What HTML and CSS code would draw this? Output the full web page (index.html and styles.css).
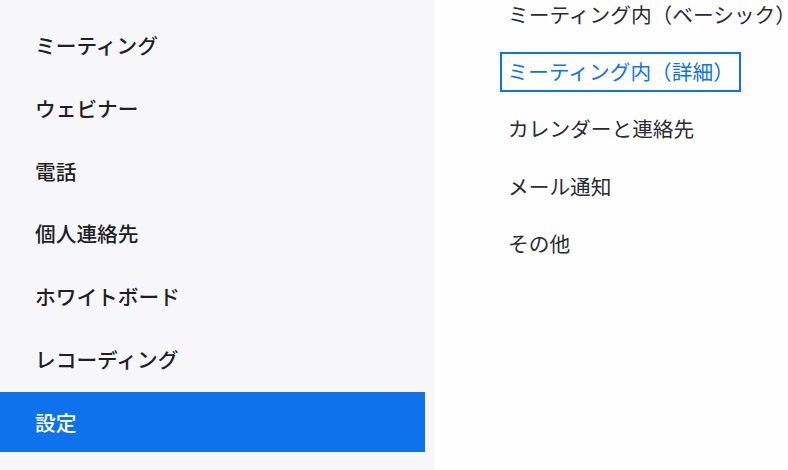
FILE: index.html
```html
<!DOCTYPE html>
<html>
<head>
    <title>設定</title>
    <link rel="stylesheet" href="styles.css">
</head>
<body>
    <div class="layout">
        <nav class="sidebar">
            <ul class="side-list">
                <li>ミーティング</li>
                <li>ウェビナー</li>
                <li>電話</li>
                <li>個人連絡先</li>
                <li>ホワイトボード</li>
                <li>レコーディング</li>
                <li class="active">設定</li>
            </ul>
        </nav>

        <div class="content">
            <ul class="tab-list">
                <li><a>ミーティング内（ベーシック）</a></li>
                <li><a class="focused">ミーティング内（詳細）</a></li>
                <li><a>カレンダーと連絡先</a></li>
                <li><a>メール通知</a></li>
                <li><a>その他</a></li>
            </ul>
        </div>
    </div>
</body>
</html>
```

FILE: styles.css
```css
/* page */
body {
    margin: 0;
    font-family: "Noto Sans CJK JP", "Noto Sans", sans-serif;
    background: #fefefe;
    overflow: hidden;
}

.layout {
    display: flex;
    height: 470px;
}

/* left menu */
.sidebar {
    width: 434px;
    flex-shrink: 0;
    background-color: #f7f7fa;
    padding-top: 15px;
    box-sizing: border-box;
}

.side-list {
    list-style-type: none;
    margin: 0;
    padding: 0;
    width: 425px;
    display: flex;
    flex-direction: column;
    gap: 2.8px;
}

.side-list li {
    height: 60px;
    display: flex;
    align-items: center;
    padding-left: 35px;
    font-size: 20.7px;
    font-weight: 500;
    color: #1f1f27;
}

.side-list li.active {
    background-color: #0e72ed;
    color: #ffffff;
}

/* right side tabs */
.content {
    flex: 1;
    padding-left: 66px;
}

.tab-list {
    list-style-type: none;
    margin: -6px 0 0 0;
    padding: 0;
    display: flex;
    flex-direction: column;
    align-items: flex-start;
    gap: 16.5px;
}

.tab-list a {
    display: block;
    font-size: 20.7px;
    line-height: 29px;
    padding: 4px 6px;
    border: 2px solid transparent;
    color: #2b2b33;
    white-space: nowrap;
}

.tab-list a.focused {
    border: 2.5px solid #0e72ed;
    padding: 3.5px 5.5px;
    color: #0e72ed;
}
```
